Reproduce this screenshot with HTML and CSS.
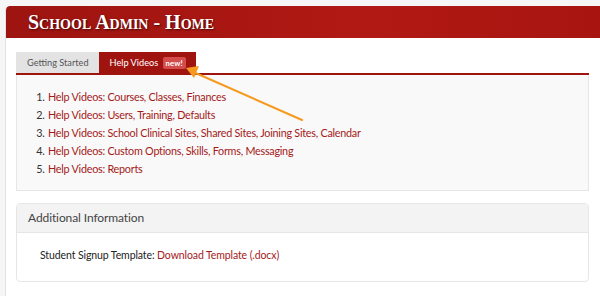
FILE: index.html
```html
<!DOCTYPE html>
<html>
<head>
    <meta charset="UTF-8">
    <title>School Admin - Home</title>
    <link rel="stylesheet" href="styles.css">
</head>
<body>
    <div class="page">
        <div class="header">
            <h1>School Admin - Home</h1>
        </div>

        <div class="content">
            <div class="tabs">
                <div class="tab">Getting Started</div>
                <div class="tab active">Help Videos <span class="badge">new!</span></div>
            </div>

            <div class="tab-panel">
                <ol class="video-list">
                    <li><a href="#">Help Videos: Courses, Classes, Finances</a></li>
                    <li><a href="#">Help Videos: Users, Training, Defaults</a></li>
                    <li><a href="#">Help Videos: School Clinical Sites, Shared Sites, Joining Sites, Calendar</a></li>
                    <li><a href="#">Help Videos: Custom Options, Skills, Forms, Messaging</a></li>
                    <li><a href="#">Help Videos: Reports</a></li>
                </ol>
            </div>

            <div class="card">
                <div class="card-title">Additional Information</div>
                <div class="card-body">
                    Student Signup Template: <a href="#">Download Template (.docx)</a>
                </div>
            </div>
        </div>

        <!-- annotation arrow -->
        <svg class="arrow" width="600" height="296" viewBox="0 0 600 296">
            <line x1="302" y1="120" x2="191" y2="71" stroke="#f59a1f" stroke-width="2" stroke-linecap="round"/>
            <polygon points="186,68 199,66 194,78" fill="#f59a1f"/>
        </svg>
    </div>
</body>
</html>
```

FILE: styles.css
```css
body {
    margin: 0;
    padding: 0;
    background-color: #f6f6f6;
    font-family: Lato, "Open Sans", sans-serif;
    color: #333;
}
.page {
    margin: 6px 0 0 5px;
    height: 290px;
    background-color: white;
    border-left: 1px solid #e2e2e2;
    border-top-left-radius: 4px;
    overflow: hidden;
}
.header {
    height: 32px;
    background: linear-gradient(to right, #9d1410, #b11914 60%, #a81511);
    border-top-left-radius: 4px;
    display: flex;
    align-items: center;
    padding-left: 22px;
}
.header h1 {
    margin: 0;
    font-family: "Liberation Serif", serif;
    font-variant: small-caps;
    font-weight: bold;
    font-size: 20px;
    color: white;
    text-shadow: 1px 1px 2px rgba(0,0,0,0.6);
}
.content {
    padding: 14px 11px 0 10px;
}
.tabs {
    display: flex;
    border-bottom: 2px solid #a01410;
}
.tab {
    height: 21px;
    line-height: 21px;
    padding: 0 10px 0 11px;
    font-size: 9.2px;
    background-color: #e3e3e3;
    color: #555;
}
.tab.active {
    background-color: #a01410;
    color: white;
    padding: 0 10px 0 11px;
}
.badge {
    display: inline-block;
    margin-left: 2px;
    padding: 0 3px;
    height: 12px;
    line-height: 12px;
    border-radius: 2px;
    background-color: #d34b4b;
    font-size: 7.6px;
    font-weight: bold;
    letter-spacing: 0.2px;
    vertical-align: 0;
}
.tab-panel {
    background-color: #f9f9f9;
    border: 1px solid #e6e6e6;
    border-top: none;
    padding: 13px 0 12px 0;
}
.video-list {
    margin: 0;
    padding-left: 30px;
    font-size: 10.8px;
    letter-spacing: -0.25px;
    line-height: 18px;
}
.video-list li {
    padding-left: 1px;
}
a {
    color: #a4191a;
    text-decoration: none;
}
.card {
    margin-top: 12px;
    border: 1px solid #e6e6e6;
    border-radius: 4px;
    overflow: hidden;
}
.card-title {
    height: 28px;
    line-height: 28px;
    padding-left: 11px;
    background-color: #f3f3f3;
    border-bottom: 1px solid #e6e6e6;
    font-size: 12px;
    letter-spacing: -0.1px;
    color: #444;
}
.card-body {
    height: 48px;
    line-height: 44px;
    padding-left: 23px;
    font-size: 10.5px;
    letter-spacing: -0.1px;
    color: #222;
}
.arrow {
    position: absolute;
    left: 0;
    top: 0;
}
```
